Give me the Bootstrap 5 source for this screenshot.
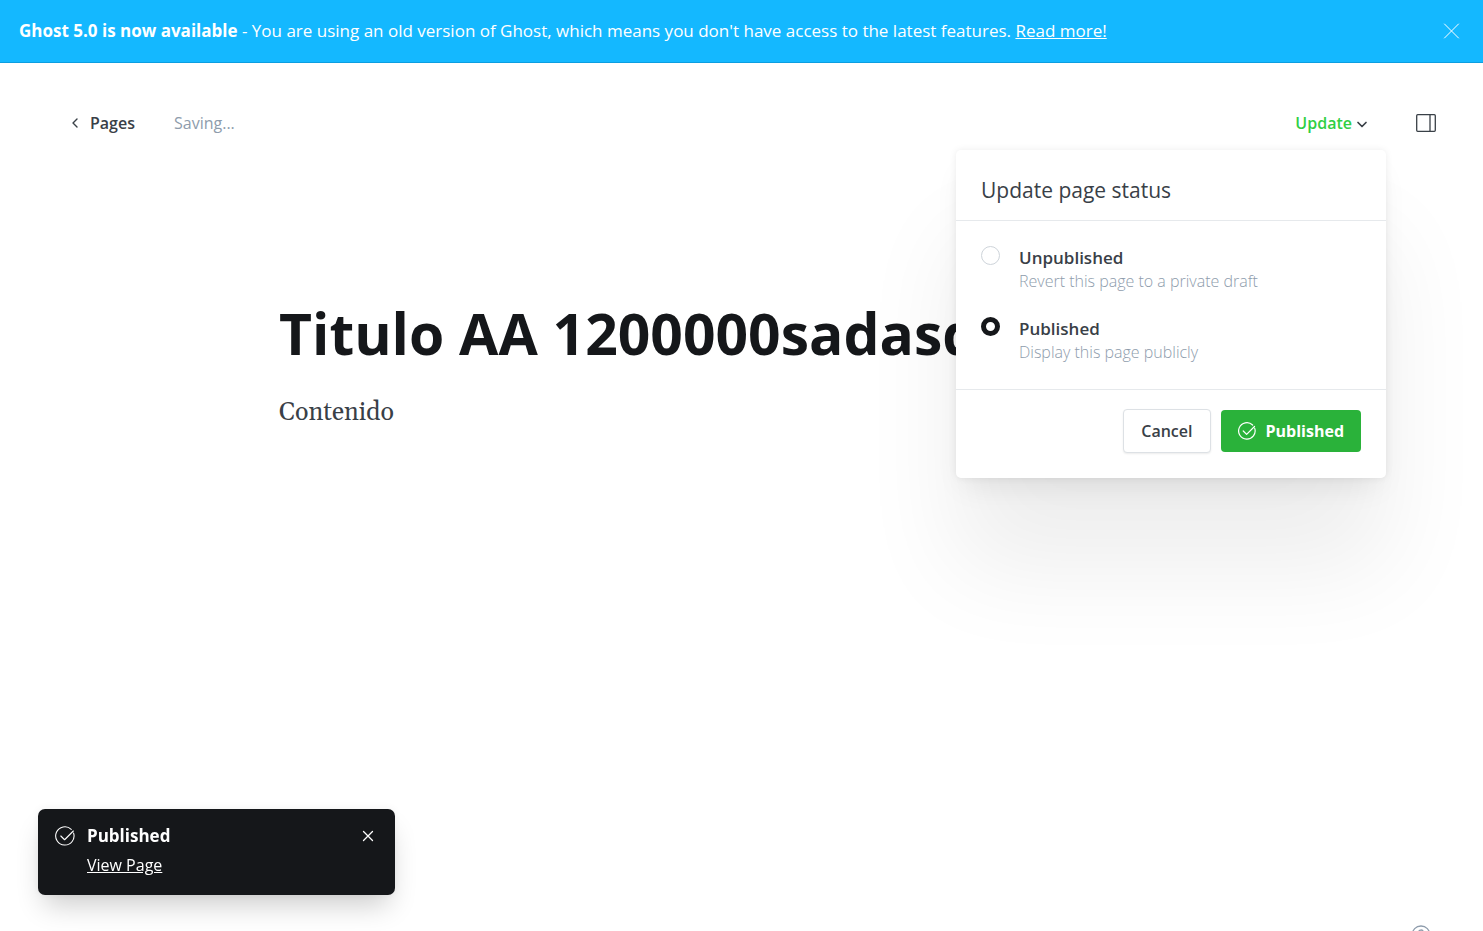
<!DOCTYPE html>
<html lang="en">
<head>
<meta charset="utf-8">
<meta name="viewport" content="width=device-width, initial-scale=1">
<title>Ghost editor</title>
<link href="https://cdn.jsdelivr.net/npm/bootstrap@5.3.0/dist/css/bootstrap.min.css" rel="stylesheet">
<style>
  :root { --ink: #15171a; --text: #394047; --muted: #8e9cac; --line: #e6e9ec; --green: #30cf43; }
  body { font-family: "Open Sans", "Noto Sans", sans-serif; font-size: 16px; line-height: 24px; color: var(--text); background: #fff; overflow: hidden; }
  svg { display: block; fill: none; stroke: currentColor; stroke-linecap: round; stroke-linejoin: round; }
  .upgrade-bar { background: #14b8ff; border-bottom: 1px solid #0c9ee0; color: #fff; font-size: 17px; padding: 19px 23px 19px 19px; }
  .upgrade-bar a { color: #fff; }
  .plain-btn { background: none; border: 0; padding: 0; color: inherit; }
  .editor-header { padding: 48px 47px 0 70px; }
  .back-link { color: var(--text); font-weight: 600; gap: 10px; }
  .saving-note { color: var(--muted); margin-left: 39px; }
  .update-btn { color: var(--green); font-weight: 600; gap: 4px; }
  .update-btn svg { color: var(--text); margin-top: 2px; }
  .status-menu { width: 430px; top: 39px; right: -18px; border-radius: 5px; box-shadow: 0 0 7px rgba(0,0,0,.08), 0 16px 28px -8px rgba(0,0,0,.08), 0 90px 100px rgba(0,0,0,.07); z-index: 5; }
  .status-title { font-size: 21px; line-height: 24px; font-weight: 400; padding: 28px 25px 18px; border-bottom: 1px solid var(--line); }
  .status-body { padding: 25px 25px 24px; gap: 23px; border-bottom: 1px solid var(--line); }
  .status-choice { gap: 19px; }
  .status-choice input { appearance: none; width: 19px; height: 19px; margin: 0; border: 1px solid #ced4da; border-radius: 50%; background: #fff; flex: none; }
  .status-choice input:checked { border: 5px solid var(--ink); }
  .choice-name { font-weight: 600; font-size: 17px; line-height: 23px; }
  .choice-hint { font-weight: 300; font-size: 16px; line-height: 25px; color: var(--muted); }
  .status-foot { padding: 19px 25px 25px; gap: 10px; }
  .cancel-btn { --bs-btn-color: var(--text); --bs-btn-border-color: #dde1e5; --bs-btn-bg: #fff; font-weight: 600; padding: 9px 17px; border-radius: 4px; box-shadow: 0 1px 2px rgba(0,0,0,.08); }
  .publish-btn { --bs-btn-color: #fff; --bs-btn-bg: #2ab23a; font-weight: 700; border: 0; padding: 9px 17px; border-radius: 4px; gap: 10px; }
  .writing-area { max-width: 925px; padding-top: 158px; }
  .page-title { border: 0; padding: 0; width: 100%; color: var(--ink); font-size: 57px; line-height: 80px; font-weight: 700; outline: 0; background: none; }
  .page-copy { font-family: Gelasio, Georgia, "DejaVu Serif", "Liberation Serif", serif; font-size: 25px; line-height: 40px; padding-top: 20px; }
  .notice { left: 38px; bottom: 36px; width: 357px; padding: 15px 20px 18px 17px; border-radius: 7px; background: var(--ink); color: #fff; box-shadow: 0 0 10px rgba(0,0,0,.06), 0 16px 28px -6px rgba(0,0,0,.2); }
  .notice svg { margin-top: 2px; }
  .notice a { color: #fff; font-size: 16px; line-height: 24px; margin-top: 5px; }
  .notice-title { font-size: 17px; font-weight: 700; }
  .notice .plain-btn { margin-top: 3px; }
  .help-link { right: 52px; bottom: -14px; color: var(--muted); }
</style>
</head>
<body class="vh-100">
<div class="upgrade-bar d-flex align-items-center justify-content-between">
  <div><strong>Ghost 5.0 is now available</strong> - You are using an old version of Ghost, which means you don't have access to the latest features. <a href="#">Read more!</a></div>
  <button class="plain-btn" type="button" aria-label="Close announcement"><svg width="17" height="17" viewBox="0 0 17 17"><path d="M1.500 1l14 14M15.500 1l-14 14"/></svg></button>
</div>

<header class="editor-header d-flex align-items-center justify-content-between">
  <div class="d-flex align-items-center">
    <a href="#" class="back-link d-flex align-items-center text-decoration-none"><svg width="10" height="12" viewBox="0 0 10 12" stroke-width="1.400"><path d="M7 2L3 6l4 4"/></svg>Pages</a>
    <span class="saving-note">Saving...</span>
  </div>
  <div class="d-flex align-items-center gap-5">
    <div class="position-relative">
      <button class="plain-btn update-btn d-flex align-items-center" type="button" aria-expanded="true">Update<svg width="12" height="12" viewBox="0 0 12 12" stroke-width="1.700"><path d="M2 4.500l4 4 4-4"/></svg></button>
      <form class="status-menu position-absolute bg-white">
        <h2 class="status-title m-0">Update page status</h2>
        <div class="status-body d-flex flex-column">
          <label class="status-choice d-flex"><input type="radio" name="status"><span class="d-flex flex-column"><span class="choice-name">Unpublished</span><span class="choice-hint">Revert this page to a private draft</span></span></label>
          <label class="status-choice d-flex"><input type="radio" name="status" checked><span class="d-flex flex-column"><span class="choice-name">Published</span><span class="choice-hint">Display this page publicly</span></span></label>
        </div>
        <div class="status-foot d-flex justify-content-end align-items-center">
          <button class="btn cancel-btn" type="button">Cancel</button>
          <button class="btn publish-btn d-flex align-items-center" type="button"><svg width="18" height="18" viewBox="0 0 24 24" stroke-width="1.600"><path d="M22.300 8.500A11 11 0 1 1 19.500 4M7 12l4.500 4.500L22 6"/></svg>Published</button>
        </div>
      </form>
    </div>
    <button class="plain-btn" type="button" aria-label="Settings"><svg width="20" height="18" viewBox="0 0 20 18" stroke-width="1.300"><rect x=".7" y=".7" width="18.600" height="16.600" rx="1"/><path d="M14 1v16"/></svg></button>
  </div>
</header>

<main class="writing-area mx-auto">
  <input class="page-title" type="text" aria-label="Page title" value="Titulo AA 1200000sadasd">
  <p class="page-copy m-0">Contenido</p>
</main>

<aside class="notice position-fixed d-flex align-items-start" role="status">
  <svg class="flex-shrink-0 me-2" width="20" height="20" viewBox="0 0 24 24" stroke-width="1.300"><path d="M22.300 8.500A11 11 0 1 1 19.500 4M7 12l4.500 4.500L22 6"/></svg>
  <div class="flex-grow-1 ms-1"><div class="notice-title">Published</div><a href="#" class="d-inline-block">View Page</a></div>
  <button class="plain-btn" type="button" aria-label="Dismiss"><svg width="14" height="14" viewBox="0 0 14 14" stroke-width="1.300"><path d="M2.500 2.500l9 9M11.500 2.500l-9 9"/></svg></button>
</aside>

<a href="#" class="help-link position-fixed" aria-label="Help"><svg width="20" height="20" viewBox="0 0 20 20" stroke-width="1.300"><circle cx="10" cy="10" r="9"/><path d="M7.500 7.500a2.500 2.500 0 1 1 3.500 2.300q-1 .6-1 1.700M10 14v.5"/></svg></a>
<script src="https://cdn.jsdelivr.net/npm/bootstrap@5.3.0/dist/js/bootstrap.bundle.min.js"></script>
</body>
</html>
